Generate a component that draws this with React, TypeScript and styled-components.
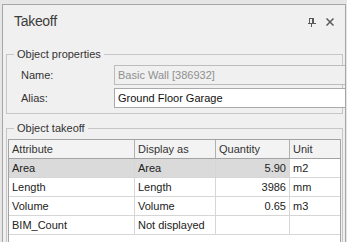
import React from "react";
import styled, { createGlobalStyle } from "styled-components";

const GlobalStyle = createGlobalStyle`
  html, body {
    margin: 0;
    padding: 0;
  }
  body {
    background: #e6e6e6;
    font-family: "Liberation Sans", Arial, sans-serif;
    font-size: 11px;
    color: #222;
    overflow: hidden;
  }
`;

const Panel = styled.div`
  margin: 4px 1px 0 2px;
  height: 237px;
  border: 1px solid #a6a6a6;
  border-bottom: none;
  background: #f0f0f0;
  overflow: hidden;
`;

const Header = styled.header`
  display: flex;
  align-items: flex-start;
  justify-content: space-between;
  height: 42px;
  padding: 6px 11px 0 11px;
  box-sizing: border-box;
`;

const Title = styled.h1`
  margin: 0;
  font-size: 14px;
  line-height: 20px;
  font-weight: normal;
  letter-spacing: -0.3px;
  color: #3c3c3c;
`;

const Tools = styled.div`
  display: flex;
  gap: 10px;
  margin-top: 7px;
`;

const ToolButton = styled.span`
  display: block;
  width: 8px;
  height: 9px;
  svg {
    display: block;
  }
`;

const Group = styled.fieldset<{ $gap?: number }>`
  margin: ${(p) => p.$gap ?? 0}px 2px 0 3px;
  padding: 0;
  border: 1px solid #c6c6c6;
  min-width: 0;
`;

const Legend = styled.legend`
  margin-left: 7px;
  padding: 0 3px;
  line-height: 15px;
  color: #333;
`;

const Fields = styled.div`
  display: grid;
  grid-template-columns: 93px 240px;
  row-gap: 3px;
  align-items: center;
  padding: 3px 0 5px 14px;
`;

const Label = styled.label`
  color: #333;
`;

const TextBox = styled.input<{ $muted?: boolean }>`
  box-sizing: border-box;
  width: 240px;
  height: 20px;
  margin: 0;
  padding: 0 3px;
  font: 11px "Liberation Sans", Arial, sans-serif;
  outline: none;
  border: 1px solid ${(p) => (p.$muted ? "#bcbcbc" : "#a9a9a9")};
  background: ${(p) => (p.$muted ? "#f0f0f0" : "#ffffff")};
  color: ${(p) => (p.$muted ? "#8f8f8f" : "#111")};
  -webkit-text-fill-color: ${(p) => (p.$muted ? "#8f8f8f" : "#111")};
  opacity: 1;
`;

const GridWrap = styled.div`
  padding: 3px 1px 0 1px;
`;

const Grid = styled.div`
  height: 110px;
  border: 1px solid #a3a3a3;
  border-bottom: none;
  background: #fff;
`;

const Row = styled.div`
  display: grid;
  grid-template-columns: 126px 81px 74px 50px;
`;

const HeadCell = styled.div`
  box-sizing: border-box;
  height: 19px;
  line-height: 18px;
  padding: 0 3px;
  background: #f3f3f3;
  color: #333;
  border-bottom: 1px solid #a3a3a3;
  border-right: 1px solid #b0b0b0;
  &:last-child {
    border-right: none;
  }
`;

const Cell = styled.div<{ $selected?: boolean; $right?: boolean }>`
  box-sizing: border-box;
  height: 19px;
  line-height: 18px;
  padding: 0 3px;
  white-space: nowrap;
  overflow: hidden;
  text-align: ${(p) => (p.$right ? "right" : "left")};
  background: ${(p) => (p.$selected ? "#dadada" : "#fff")};
  color: #222;
  border-bottom: 1px solid #d6d6d6;
  border-right: 1px solid #d6d6d6;
  &:last-child {
    border-right: none;
  }
`;

interface TakeoffRow {
  attribute: string;
  displayAs: string;
  quantity: string;
  unit: string;
}

const rows: TakeoffRow[] = [
  { attribute: "Area", displayAs: "Area", quantity: "5.90", unit: "m2" },
  { attribute: "Length", displayAs: "Length", quantity: "3986", unit: "mm" },
  { attribute: "Volume", displayAs: "Volume", quantity: "0.65", unit: "m3" },
  { attribute: "BIM_Count", displayAs: "Not displayed", quantity: "", unit: "" },
];

const PinIcon = () => (
  <svg width="8" height="9" viewBox="0 0 8 9" fill="#5a5a5a">
    <rect x="1" y="0" width="5" height="1" />
    <rect x="1" y="0" width="1" height="5" />
    <rect x="5" y="0" width="1" height="5" />
    <rect x="4" y="1" width="1" height="4" />
    <rect x="0" y="5" width="8" height="1" />
    <rect x="3" y="6" width="1" height="3" />
  </svg>
);

const CloseIcon = () => (
  <svg width="8" height="8" viewBox="0 0 8 8" stroke="#5a5a5a" strokeWidth="1.5">
    <line x1="0.5" y1="0.5" x2="7.5" y2="7.5" />
    <line x1="7.5" y1="0.5" x2="0.5" y2="7.5" />
  </svg>
);

const App = () => {
  return (
    <>
      <GlobalStyle />
      <Panel>
        <Header>
          <Title>Takeoff</Title>
          <Tools>
            <ToolButton>
              <PinIcon />
            </ToolButton>
            <ToolButton>
              <CloseIcon />
            </ToolButton>
          </Tools>
        </Header>

        <Group>
          <Legend>Object properties</Legend>
          <Fields>
            <Label>Name:</Label>
            <TextBox $muted disabled value="Basic Wall [386932]" readOnly />
            <Label>Alias:</Label>
            <TextBox defaultValue="Ground Floor Garage" />
          </Fields>
        </Group>

        <Group $gap={7}>
          <Legend>Object takeoff</Legend>
          <GridWrap>
            <Grid>
              <Row>
                <HeadCell>Attribute</HeadCell>
                <HeadCell>Display as</HeadCell>
                <HeadCell>Quantity</HeadCell>
                <HeadCell>Unit</HeadCell>
              </Row>
              {rows.map((r, i) => (
                <Row key={r.attribute}>
                  <Cell $selected={i === 0}>{r.attribute}</Cell>
                  <Cell $selected={i === 0}>{r.displayAs}</Cell>
                  <Cell $selected={i === 0} $right>
                    {r.quantity}
                  </Cell>
                  <Cell>{r.unit}</Cell>
                </Row>
              ))}
            </Grid>
          </GridWrap>
        </Group>
      </Panel>
    </>
  );
};

export default App;
